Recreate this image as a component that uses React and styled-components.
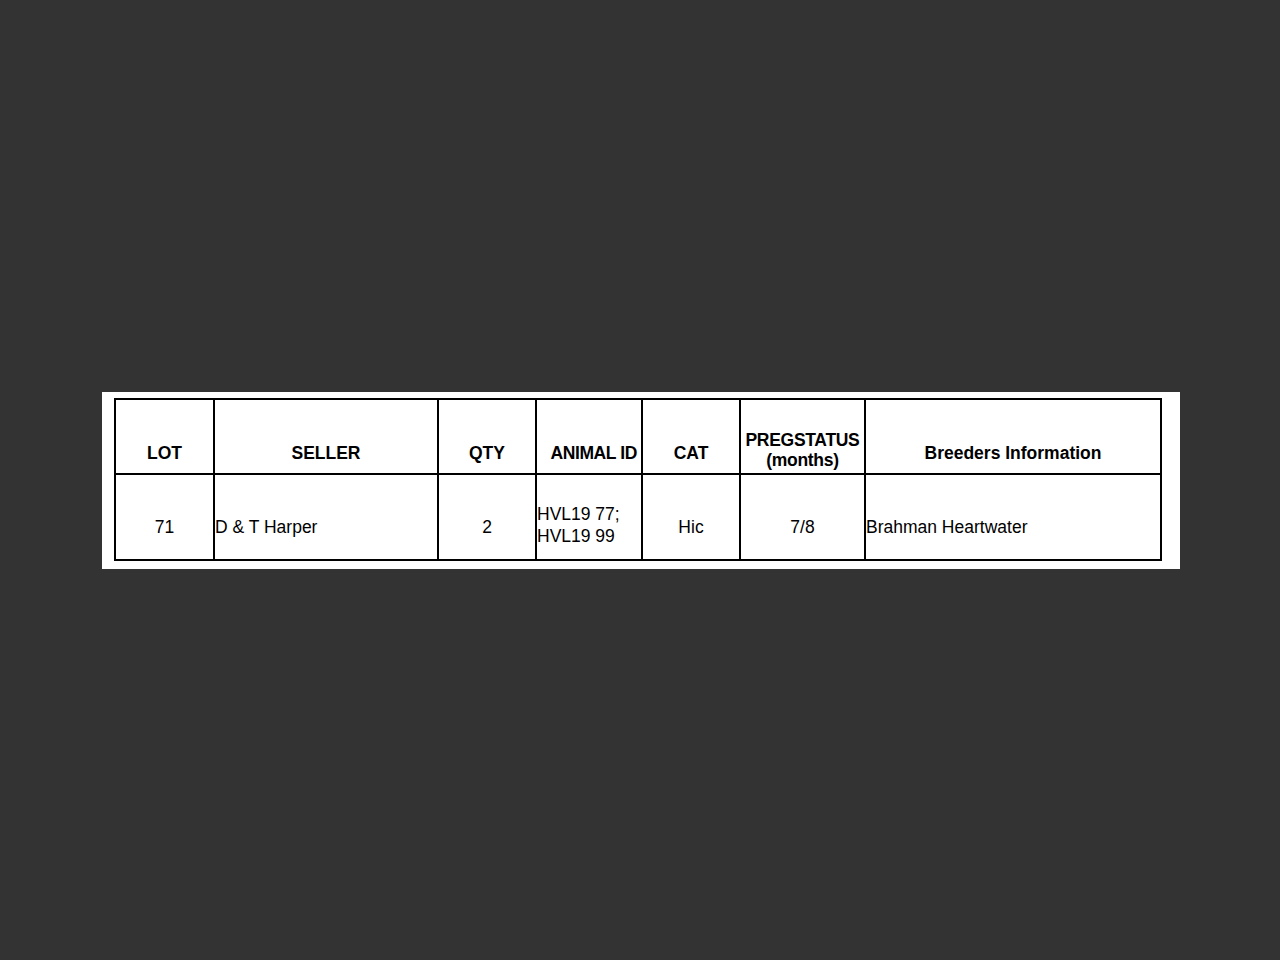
import React from "react";
import styled, { createGlobalStyle } from "styled-components";

const Global = createGlobalStyle`
  html, body { margin: 0; padding: 0; background: #333333; }
  body { font-family: "Liberation Sans", Arial, sans-serif; color: #000; }
`;

const Stage = styled.div`
  min-height: 960px;
  height: 100vh;
  display: flex;
  align-items: center;
  justify-content: center;
  padding-left: 2px;
  box-sizing: border-box;
`;

const Page = styled.div`
  background: #ffffff;
  width: 1078px;
  box-sizing: border-box;
  padding: 6px 18px 8px 12px;
`;

const Table = styled.table`
  border-collapse: separate;
  border-spacing: 0;
  table-layout: fixed;
  width: 1048px;
  border-top: 2px solid #000;
  border-left: 2px solid #000;
  font-size: 17.5px;
`;

const Head = styled.th`
  box-sizing: border-box;
  width: ${(p) => p.$w}px;
  height: 75px;
  border-right: 2px solid #000;
  border-bottom: 2px solid #000;
  padding: 0 ${(p) => p.$pr || 0}px ${(p) => p.$pb || 10}px 0;
  vertical-align: bottom;
  text-align: ${(p) => p.$align || "center"};
  font-weight: bold;
  line-height: 20px;
  letter-spacing: ${(p) => p.$ls || 0}px;
  white-space: nowrap;
  overflow: visible;
`;

const Cell = styled.td`
  box-sizing: border-box;
  height: 86px;
  border-right: 2px solid #000;
  border-bottom: 2px solid #000;
  padding: 0 0 ${(p) => p.$pb || 21}px 0;
  vertical-align: bottom;
  text-align: ${(p) => p.$align || "center"};
  font-weight: normal;
  line-height: 22px;
  white-space: nowrap;
`;

export default function App() {
  return (
    <>
      <Global />
      <Stage>
        <Page>
          <Table>
            <thead>
              <tr>
                <Head $w={99}>LOT</Head>
                <Head $w={224}>SELLER</Head>
                <Head $w={98}>QTY</Head>
                <Head $w={106} $align="right" $pr={4} $ls={-0.4}>
                  ANIMAL ID
                </Head>
                <Head $w={98}>CAT</Head>
                <Head $w={125} $pb={3} $ls={-0.3}>
                  PREGSTATUS
                  <br />
                  (months)
                </Head>
                <Head $w={296}>Breeders Information</Head>
              </tr>
            </thead>
            <tbody>
              <tr>
                <Cell>71</Cell>
                <Cell $align="left">D &amp; T Harper</Cell>
                <Cell>2</Cell>
                <Cell $align="left" $pb={12}>
                  HVL19 77;
                  <br />
                  HVL19 99
                </Cell>
                <Cell>Hic</Cell>
                <Cell>7/8</Cell>
                <Cell $align="left">Brahman Heartwater</Cell>
              </tr>
            </tbody>
          </Table>
        </Page>
      </Stage>
    </>
  );
}
